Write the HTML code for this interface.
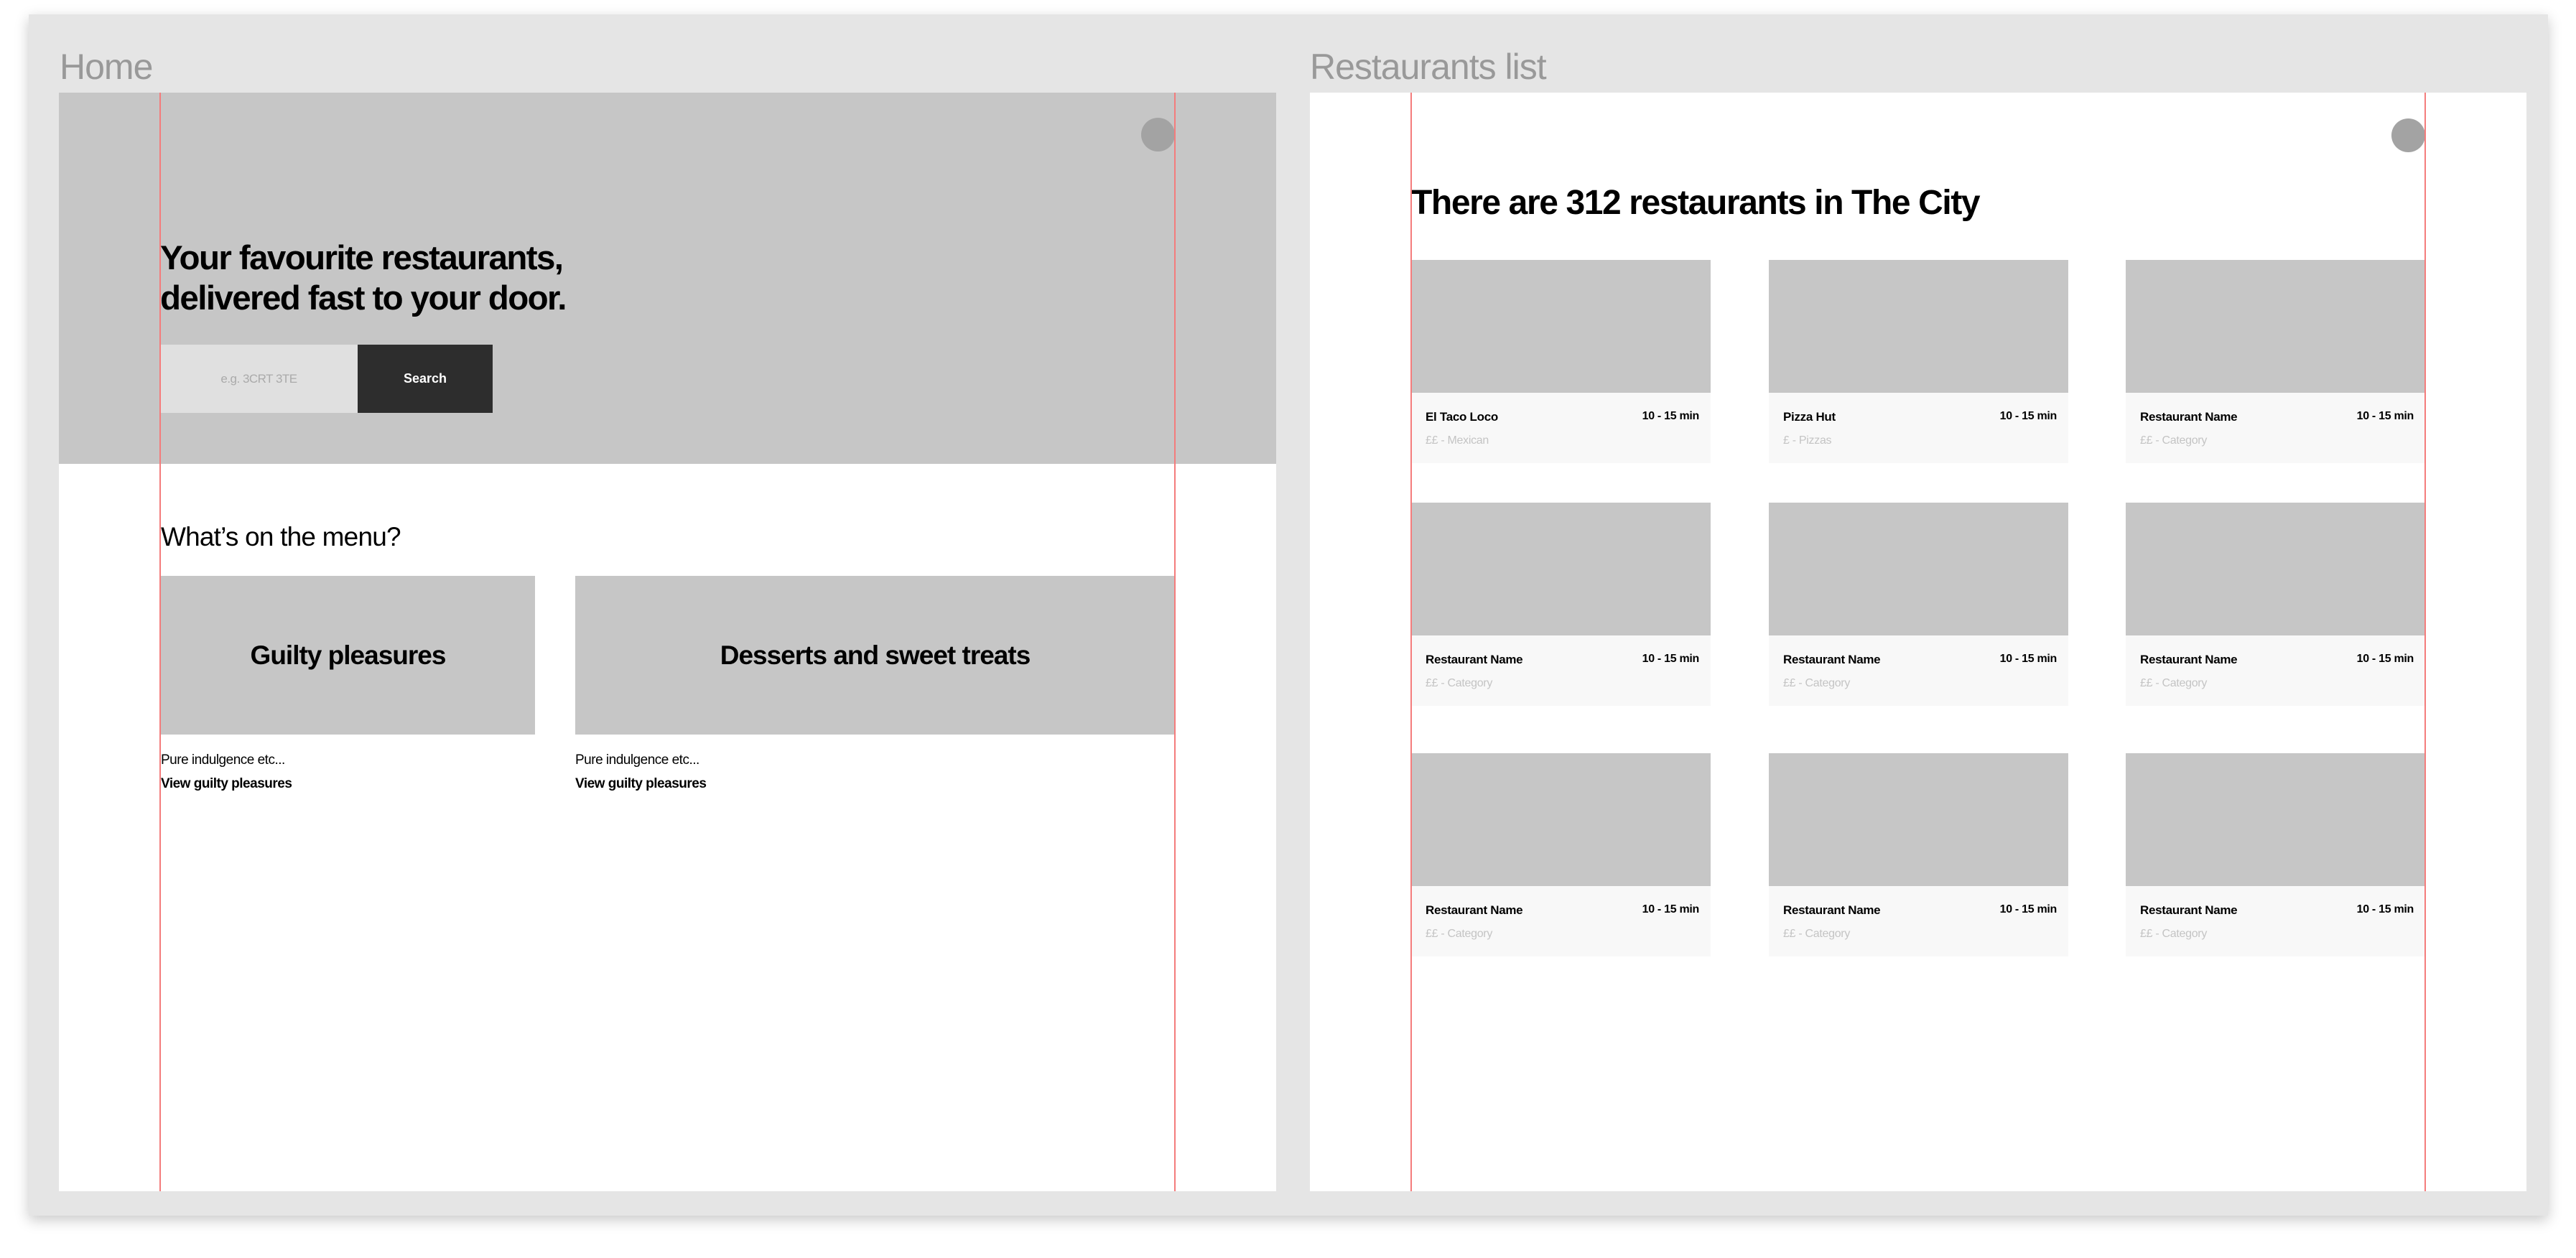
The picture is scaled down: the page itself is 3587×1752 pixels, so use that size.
<!DOCTYPE html>
<html><head><meta charset="utf-8"><style>
*{margin:0;padding:0;box-sizing:border-box}
body{width:3587px;height:1752px;background:#fff;position:relative;overflow:hidden;font-family:"Liberation Sans",Arial,sans-serif}
.abs{position:absolute}
.panel{left:40px;top:20px;width:3508px;height:1673px;background:#e5e5e5;box-shadow:0 6px 18px rgba(0,0,0,.22)}
.lbl{font-size:50px;color:#999;letter-spacing:-1px;line-height:1}
.art{background:#fff}
.red{width:2px;background:#f47c7c}
.circ{width:47px;height:47px;border-radius:50%;background:#a3a3a3}
.card{width:417px;height:283px;background:#f8f8f8}
.card .img{height:185px;background:#c6c6c6}
.nm{position:absolute;left:20px;top:209px;font-size:17px;font-weight:bold;color:#000;letter-spacing:-.3px}
.tm{position:absolute;right:16px;top:209px;font-size:16px;font-weight:bold;color:#000;letter-spacing:-.3px}
.sb{position:absolute;left:20px;top:243px;font-size:16px;color:#c4c4c4;letter-spacing:-.3px}
</style></head><body>
<div class="abs panel"></div>
<div class="abs lbl" style="left:83px;top:68px">Home</div>
<div class="abs lbl" style="left:1824px;top:68px">Restaurants list</div>

<!-- Home artboard -->
<div class="abs art" style="left:82px;top:129px;width:1695px;height:1530px"></div>
<div class="abs" style="left:82px;top:129px;width:1695px;height:517px;background:#c6c6c6"></div>
<div class="abs" style="left:223px;top:332px;font-size:47.5px;font-weight:bold;line-height:56px;letter-spacing:-1.6px;color:#000">Your favourite restaurants,<br>delivered fast to your door.</div>
<div class="abs" style="left:223px;top:480px;width:275px;height:95px;background:#e0e0e0;color:#aaa;font-size:17px;text-align:center;line-height:95px;letter-spacing:-.5px">e.g. 3CRT 3TE</div>
<div class="abs" style="left:498px;top:480px;width:188px;height:95px;background:#2d2d2d;color:#fff;font-size:18px;font-weight:bold;text-align:center;line-height:95px">Search</div>
<div class="abs circ" style="left:1589px;top:164px"></div>
<div class="abs" style="left:224px;top:727px;font-size:37px;letter-spacing:-.8px;color:#000">What’s on the menu?</div>
<div class="abs" style="left:224px;top:802px;width:521px;height:221px;background:#c6c6c6;font-size:37px;font-weight:bold;letter-spacing:-1px;text-align:center;line-height:221px">Guilty pleasures</div>
<div class="abs" style="left:801px;top:802px;width:835px;height:221px;background:#c6c6c6;font-size:37px;font-weight:bold;letter-spacing:-1px;text-align:center;line-height:221px">Desserts and sweet treats</div>
<div class="abs" style="left:224px;top:1048px;font-size:19px;letter-spacing:-.5px">Pure indulgence etc...</div>
<div class="abs" style="left:224px;top:1081px;font-size:19px;font-weight:bold;letter-spacing:-.5px">View guilty pleasures</div>
<div class="abs" style="left:801px;top:1048px;font-size:19px;letter-spacing:-.5px">Pure indulgence etc...</div>
<div class="abs" style="left:801px;top:1081px;font-size:19px;font-weight:bold;letter-spacing:-.5px">View guilty pleasures</div>
<div class="abs red" style="left:222px;top:129px;height:1530px"></div>
<div class="abs red" style="left:1635px;top:129px;height:1530px"></div>

<!-- Restaurants artboard -->
<div class="abs art" style="left:1824px;top:129px;width:1694px;height:1530px"></div>
<div class="abs circ" style="left:3330px;top:165px"></div>
<div class="abs" style="left:1965px;top:255px;font-size:48px;font-weight:bold;letter-spacing:-1.4px;color:#000">There are 312 restaurants in The City</div>

<div class="abs card" style="left:1965px;top:362px"><div class="img"></div><div class="nm">El Taco Loco</div><div class="tm">10 - 15 min</div><div class="sb">££ - Mexican</div></div>
<div class="abs card" style="left:2463px;top:362px"><div class="img"></div><div class="nm">Pizza Hut</div><div class="tm">10 - 15 min</div><div class="sb">£ - Pizzas</div></div>
<div class="abs card" style="left:2960px;top:362px"><div class="img"></div><div class="nm">Restaurant Name</div><div class="tm">10 - 15 min</div><div class="sb">££ - Category</div></div>

<div class="abs card" style="left:1965px;top:700px"><div class="img"></div><div class="nm">Restaurant Name</div><div class="tm">10 - 15 min</div><div class="sb">££ - Category</div></div>
<div class="abs card" style="left:2463px;top:700px"><div class="img"></div><div class="nm">Restaurant Name</div><div class="tm">10 - 15 min</div><div class="sb">££ - Category</div></div>
<div class="abs card" style="left:2960px;top:700px"><div class="img"></div><div class="nm">Restaurant Name</div><div class="tm">10 - 15 min</div><div class="sb">££ - Category</div></div>

<div class="abs card" style="left:1965px;top:1049px"><div class="img"></div><div class="nm">Restaurant Name</div><div class="tm">10 - 15 min</div><div class="sb">££ - Category</div></div>
<div class="abs card" style="left:2463px;top:1049px"><div class="img"></div><div class="nm">Restaurant Name</div><div class="tm">10 - 15 min</div><div class="sb">££ - Category</div></div>
<div class="abs card" style="left:2960px;top:1049px"><div class="img"></div><div class="nm">Restaurant Name</div><div class="tm">10 - 15 min</div><div class="sb">££ - Category</div></div>

<div class="abs red" style="left:1964px;top:129px;height:1530px"></div>
<div class="abs red" style="left:3376px;top:129px;height:1530px"></div>
</body></html>
